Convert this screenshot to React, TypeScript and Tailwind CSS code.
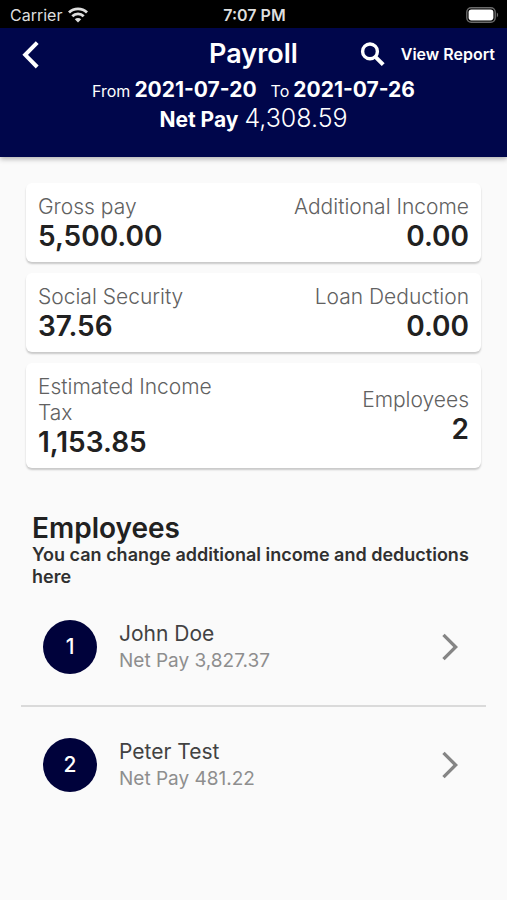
import { MdArrowForwardIos } from 'react-icons/md';

type Figure = { label: string; value: string };

const summary: { left: Figure; right: Figure }[] = [
  {
    left: { label: 'Gross pay', value: '5,500.00' },
    right: { label: 'Additional Income', value: '0.00' },
  },
  {
    left: { label: 'Social Security', value: '37.56' },
    right: { label: 'Loan Deduction', value: '0.00' },
  },
  {
    left: { label: 'Estimated Income Tax', value: '1,153.85' },
    right: { label: 'Employees', value: '2' },
  },
];

const employees = [
  { id: 1, name: 'John Doe', netPay: '3,827.37' },
  { id: 2, name: 'Peter Test', netPay: '481.22' },
];

function WifiIcon() {
  return (
    <svg width="20" height="16" viewBox="0 0 20 16" fill="none" stroke="currentColor" strokeWidth="2.8">
      <path d="M1 5.6a12.8 12.8 0 0 1 18 0" />
      <path d="M4.3 9.3a8.1 8.1 0 0 1 11.4 0" />
      <path d="M10 15.4 6.8 12.2a4.6 4.6 0 0 1 6.4 0z" fill="currentColor" stroke="none" />
    </svg>
  );
}

function BatteryIcon() {
  return (
    <svg width="33" height="16" viewBox="0 0 33 16" fill="none">
      <rect x="0.8" y="0.8" width="28.4" height="14.4" rx="4.4" stroke="#6b6b6b" strokeWidth="1.4" />
      <rect x="2.6" y="2.6" width="24.8" height="10.8" rx="2.8" fill="#fff" />
      <path d="M30.8 5.6c1.8.8 1.8 4 0 4.8z" fill="#6b6b6b" />
    </svg>
  );
}

function BackIcon() {
  return (
    <svg width="32" height="32" viewBox="0 0 32 32" fill="none" stroke="currentColor" strokeWidth="4">
      <path d="M15.2 4.6 3.2 16.8l12 12.2" />
    </svg>
  );
}

function SearchIcon() {
  return (
    <svg width="32" height="32" viewBox="0 0 32 32" fill="none" stroke="currentColor">
      <circle cx="13" cy="13.4" r="7.4" strokeWidth="3.4" />
      <path d="m18.4 18.8 7.8 7.8" strokeWidth="4" />
    </svg>
  );
}

function StatusBar() {
  return (
    <div className="grid h-7 grid-cols-3 items-center bg-black pt-px pr-2 pl-2.5 text-base text-[#dedede]">
      <div className="flex items-center gap-1.5">
        <span>Carrier</span>
        <WifiIcon />
      </div>
      <span className="text-center font-semibold">7:07 PM</span>
      <div className="flex justify-end">
        <BatteryIcon />
      </div>
    </div>
  );
}

function SummaryFigure({ label, value }: Figure) {
  return (
    <div className="flex-1">
      <dt className="text-[21px] leading-[26px] font-light text-[#616161]">{label}</dt>
      <dd className="text-[28px] leading-8 font-semibold text-[#212121]">{value}</dd>
    </div>
  );
}

export default function App() {
  return (
    <div className="min-h-screen bg-[#fafafa] font-['Inter',sans-serif]">
      <StatusBar />

      {/* App bar */}
      <header className="bg-[#00064b] pb-6 text-white shadow-[0_2px_5px_rgba(0,0,0,0.3)]">
        <div className="grid grid-cols-[1fr_auto_1fr] items-center px-3 pt-2">
          <button type="button" aria-label="Back" className="justify-self-start pl-2.5">
            <BackIcon />
          </button>
          <h1 className="text-[27px] leading-9 font-semibold">Payroll</h1>
          <div className="flex items-center justify-end gap-3">
            <button type="button" aria-label="Search">
              <SearchIcon />
            </button>
            <button type="button" className="text-base leading-5 font-semibold whitespace-nowrap">
              View Report
            </button>
          </div>
        </div>
        <div className="flex items-baseline justify-center gap-1 pt-1">
          <span className="text-base leading-7">From</span>
          <strong className="text-[21px] leading-7 font-bold">2021-07-20</strong>
          <span className="ml-2.5 text-base leading-7">To</span>
          <strong className="text-[21px] leading-7 font-bold">2021-07-26</strong>
        </div>
        <div className="flex items-baseline justify-center gap-1.5">
          <strong className="text-[21px] leading-[26px] font-bold">Net Pay</strong>
          <span className="text-[25px] leading-[26px] font-light">4,308.59</span>
        </div>
      </header>

      <main>
        <div className="space-y-[11px] px-[26px] pt-[26px]">
          {summary.map(({ left, right }) => (
            <dl
              key={left.label}
              className="flex items-center gap-9 rounded-md bg-white px-3 pt-[11px] pb-[10px] shadow-[0_2px_2px_rgba(0,0,0,0.2)]"
            >
              <SummaryFigure {...left} />
              <div className="flex flex-1 text-right">
                <SummaryFigure {...right} />
              </div>
            </dl>
          ))}
        </div>

        <section className="pt-11">
          <div className="px-8 pb-px">
            <h2 className="text-[28px] leading-8 font-semibold text-[#212121]">Employees</h2>
            <p className="text-lg leading-[22px] font-semibold text-[#303030]">
              You can change additional income and deductions here
            </p>
          </div>

          <ul className="divide-y-2 divide-[#dadada] px-[21px]">
            {employees.map(({ id, name, netPay }) => (
              <li key={id}>
                <button type="button" className="flex w-full items-center gap-[22px] py-[31px] pr-5 pl-[22px] text-left">
                  <span className="flex size-[54px] items-center justify-center rounded-full bg-[#00023b] text-[21px] font-medium text-white">
                    {id}
                  </span>
                  <span className="flex-1">
                    <span className="block text-[21px] leading-7 text-[#424242]">{name}</span>
                    <span className="block text-[19px] leading-[26px] text-[#8e8e8e]">Net Pay {netPay}</span>
                  </span>
                  <MdArrowForwardIos size={32} className="text-[#858585]" />
                </button>
              </li>
            ))}
          </ul>
        </section>
      </main>
    </div>
  );
}
